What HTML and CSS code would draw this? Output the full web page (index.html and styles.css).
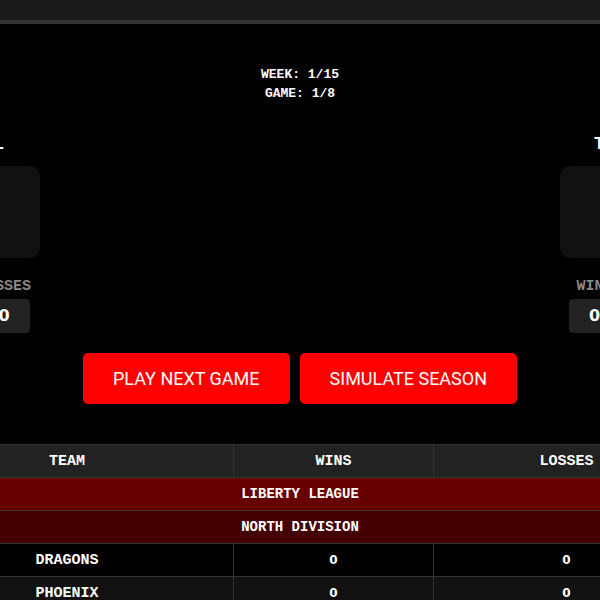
FILE: index.html
```
<!DOCTYPE html>
<html lang="en">
<head>
<meta charset="utf-8">
<meta name="viewport" content="width=device-width, initial-scale=1">
<title>Season</title>
<link rel="stylesheet" href="styles.css">
</head>
<body>
<header class="topbar"></header>
<main class="season">
  <section class="progress">
    <div>WEEK: 1/15</div>
    <div>GAME: 1/8</div>
  </section>
  <section class="center-wide">
    <div class="matchup">
      <article class="team team-home">
        <h2 class="team-name">L</h2>
        <div class="team-logo"></div>
        <div class="stat"><span class="stat-label">LOSSES</span><span class="stat-value">0</span></div>
      </article>
      <article class="team team-away">
        <h2 class="team-name">T</h2>
        <div class="team-logo"></div>
        <div class="stat"><span class="stat-label">WINS</span><span class="stat-value">0</span></div>
      </article>
    </div>
  </section>
  <div class="actions">
    <button class="action" type="button">PLAY NEXT GAME</button>
    <button class="action" type="button">SIMULATE SEASON</button>
  </div>
  <section class="center-wide">
    <table class="standings">
      <colgroup><col class="col-team"><col class="col-wins"><col class="col-losses"></colgroup>
      <thead>
        <tr><th scope="col">TEAM</th><th scope="col">WINS</th><th scope="col">LOSSES</th></tr>
      </thead>
      <tbody>
        <tr class="league"><th colspan="3">LIBERTY LEAGUE</th></tr>
        <tr class="division"><th colspan="3">NORTH DIVISION</th></tr>
        <tr><td>DRAGONS</td><td class="num">0</td><td class="num">0</td></tr>
        <tr class="alt"><td>PHOENIX</td><td class="num">0</td><td class="num">0</td></tr>
      </tbody>
    </table>
  </section>
</main>
</body>
</html>
```
FILE: styles.css
```
* { box-sizing: border-box; }

html { overflow: hidden; }

body {
  margin: 0;
  background: #000;
  color: #fff;
  font-family: "Liberation Mono", monospace;
  font-weight: bold;
}

.topbar {
  height: 24px;
  background: #1b1b1b;
  border-bottom: 4px solid #333;
}

.season { padding-top: 41px; }

.progress {
  text-align: center;
  font-size: 13px;
  line-height: 19px;
}

/* Wide blocks stay centred and overflow both sides evenly */
.center-wide {
  display: flex;
  justify-content: center;
}

.matchup {
  display: flex;
  flex: none;
  justify-content: space-between;
  width: 840px;
  margin-top: 29px;
}

.team {
  display: flex;
  flex-direction: column;
  width: 160px;
}

.team-home { align-items: flex-end; }
.team-away { align-items: flex-start; }

.team-name {
  margin: 0 36px 10px;
  font-size: 18px;
  line-height: 24px;
}

.team-away .team-name { margin-left: 34px; }

.team-logo {
  width: 100%;
  height: 92px;
  border-radius: 10px;
  background: #111;
}

.stat {
  display: flex;
  flex-direction: column;
  align-items: center;
  margin: 19px 9px 0;
}

.stat-label {
  color: #888;
  font-size: 15px;
  line-height: 20px;
}

.stat-value {
  margin-top: 2px;
  padding: 0 20px;
  border-radius: 4px;
  background: #222;
  font-family: "DejaVu Sans", sans-serif;
  font-size: 16px;
  line-height: 34px;
}

.actions {
  display: flex;
  justify-content: center;
  gap: 10px;
  margin: 20px 0 40px;
}

.action {
  padding: 15px 30px;
  border: 0;
  border-radius: 5px;
  background: #f00;
  color: #fff;
  font-family: Roboto, sans-serif;
  font-size: 18px;
  line-height: 21px;
  white-space: nowrap;
  cursor: pointer;
}

.standings {
  flex: none;
  width: 800px;
  table-layout: fixed;
  border-collapse: collapse;
  text-align: center;
  font-size: 15px;
  line-height: 20px;
}

.col-team { width: 333px; }
.col-wins { width: 200px; }

.standings th,
.standings td {
  padding: 7px 0 5px;
  border: 1px solid #333;
}

.standings thead th { background: #222; }

.standings .league th,
.standings .division th {
  padding: 6px 0;
  font-size: 14px;
}

.standings .league th { background: #600; }
.standings .division th { background: #400; }
.standings .alt { background: #111; }

.standings .num {
  padding: 6px 0;
  font-family: "DejaVu Sans", sans-serif;
  font-size: 12px;
}
```
